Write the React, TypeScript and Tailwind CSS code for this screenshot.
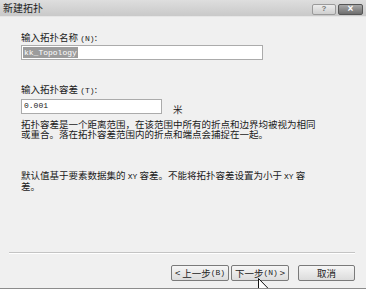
import React from "react";

const cjk = "font-['Noto_Sans_CJK_SC','Noto_Sans',sans-serif]";
const mono = "font-['Liberation_Mono','Noto_Sans_CJK_SC',monospace] text-[8px]";

function Latin({ children }: { children: React.ReactNode }) {
  return <span className={mono}>{children}</span>;
}

function DialogButton({
  children,
  className = "",
}: {
  children: React.ReactNode;
  className?: string;
}) {
  return (
    <button
      className={`h-[16px] rounded-[2px] border border-[#7a7a7a] bg-gradient-to-b from-[#f6f6f6] to-[#dcdcdc] text-[9.5px] leading-[14px] text-[#222] flex items-center justify-center ${className}`}
    >
      {children}
    </button>
  );
}

function Cursor() {
  return (
    <svg
      className="absolute left-[258px] top-[278px]"
      width="12"
      height="19"
      viewBox="0 0 12 19"
    >
      <path
        d="M0.5 0.5 L0.5 15.5 L4 12 L6.5 18 L8.5 17.2 L6 11.3 L11 11.3 Z"
        fill="#fff"
        stroke="#111"
        strokeWidth="1"
        strokeLinejoin="miter"
      />
    </svg>
  );
}

export default function App() {
  return (
    <div
      className={`relative w-[366px] h-[289px] overflow-hidden bg-[#f0f0f0] border-b border-[#8c8c8c] flex flex-col text-[#1a1a1a] ${cjk}`}
    >
      {/* title bar */}
      <div className="h-[17px] shrink-0 bg-gradient-to-b from-[#dedede] to-[#c9c9c9] border-b border-[#e6e6e6] flex items-center pl-[3px] pr-[3px]">
        <span className="text-[10px] leading-[10px] text-[#222]">新建拓扑</span>
        <div className="ml-auto flex gap-[2px] items-center mt-[2px]">
          <div className="w-[24px] h-[11px] rounded-[2px] border border-[#9a9a9a] bg-gradient-to-b from-[#ececec] to-[#cfcfcf] flex items-center justify-center text-[8px] leading-[8px] text-[#777] font-['Liberation_Sans',sans-serif] font-bold">
            ?
          </div>
          <div className="w-[25px] h-[11px] rounded-[2px] border border-[#555] bg-gradient-to-b from-[#a8a8a8] to-[#6e6e6e] flex items-center justify-center text-[10px] leading-[10px] text-white font-['Liberation_Sans',sans-serif] font-bold">
            ×
          </div>
        </div>
      </div>

      {/* body */}
      <div className="flex flex-col pl-[21px] text-[9.5px]">
        <div className="mt-[15px] h-[10px] leading-[10px]">
          输入拓扑名称 <Latin>(N)</Latin>:
        </div>
        <div className="mt-[3px] w-[242px] h-[15px] border border-[#ababab] bg-white flex items-center pl-[1px]">
          <span className="bg-[#9c9c9c] text-white px-[1px] h-[11px] leading-[11px] font-['Liberation_Mono',monospace] text-[8px]">
            kk_Topology
          </span>
        </div>

        <div className="mt-[24px] h-[10px] leading-[10px]">
          输入拓扑容差 <Latin>(T)</Latin>:
        </div>
        <div className="mt-[4px] flex items-center gap-[11px]">
          <div className="w-[141px] h-[15px] border border-[#ababab] bg-white flex items-center pl-[2px] font-['Liberation_Mono',monospace] text-[8px]">
            0.001
          </div>
          <span className="leading-[10px] mt-[6px]">米</span>
        </div>

        <p className="mt-[6px] leading-[9.5px]">
          <span className="block whitespace-nowrap">
            拓扑容差是一个距离范围，在该范围中所有的折点和边界均被视为相同
          </span>
          <span className="block whitespace-nowrap">
            或重合。落在拓扑容差范围内的折点和端点会捕捉在一起。
          </span>
        </p>

        <p className="mt-[32px] leading-[9.5px]">
          <span className="block whitespace-nowrap">
            默认值基于要素数据集的 <Latin>XY</Latin> 容差。不能将拓扑容差设置为小于{" "}
            <Latin>XY</Latin> 容
          </span>
          <span className="block whitespace-nowrap">差。</span>
        </p>
      </div>

      {/* separator */}
      <div className="mt-auto mx-[9px] mr-[11px] border-t border-[#c4c4c4] border-b border-b-white" />

      {/* buttons */}
      <div className="flex items-center justify-end gap-[2px] pr-[11px] mt-[11px] mb-[7px]">
        <DialogButton className="w-[58px]">
          <span className="mr-[2px]">&lt;</span>上一步 <Latin>(B)</Latin>
        </DialogButton>
        <DialogButton className="w-[58px]">
          下一步 <Latin>(N)</Latin>
          <span className="ml-[2px]">&gt;</span>
        </DialogButton>
        <DialogButton className="w-[57px] ml-[7px]">取消</DialogButton>
      </div>

      <Cursor />
    </div>
  );
}
